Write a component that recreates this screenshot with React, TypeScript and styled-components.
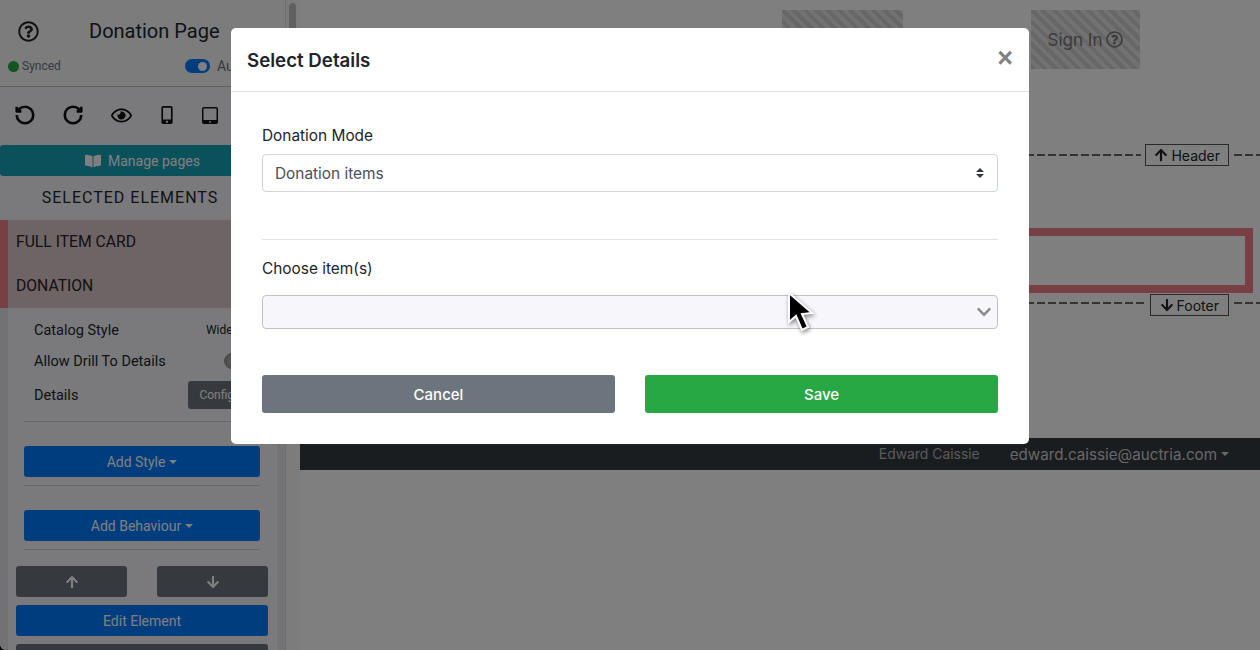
import React from "react";
import styled, { createGlobalStyle } from "styled-components";
import { FaArrowDown, FaArrowUp, FaBookOpen, FaChevronDown, FaMobileAlt, FaRegEye, FaRegQuestionCircle } from "react-icons/fa";
import { RotateCcw, RotateCw } from "lucide-react";

// =============================================================================
// GLOBAL
// =============================================================================
const GlobalStyle = createGlobalStyle`
    html, body {
        margin: 0;
        height: 100%;
        overflow: hidden;
        background: #fff;
    }
    * {
        box-sizing: border-box;
    }
`;

// =============================================================================
// SIDEBAR
// =============================================================================
const Page = styled.div`
    display: flex;
    width: 1260px;
    height: 650px;
    overflow: hidden;
    background: #000;
    font-family: "Inter", sans-serif;
`;

const Sidebar = styled.aside`
    flex: 0 0 285px;
    height: 650px;
    overflow: hidden;
    border-bottom-left-radius: 6px;
    background: #f4f5f9;
    font-family: "Roboto", sans-serif;
    color: #212529;
`;

const ScrollTrack = styled.div`
    flex: 0 0 15px;
    padding: 3px 4px 0 3px;
    background: #f9f9f9;
    border-left: 1px solid #dcdcdc;
`;

const ScrollThumb = styled.div`
    height: 56px;
    border-radius: 4px;
    background: #c1c1c1;
`;

const SideHeader = styled.div`
    height: 87px;
    padding: 20px 8px 0;
    background: #f8f8f8;
    border-bottom: 1px solid #bcbcbc;
`;

const TitleRow = styled.div`
    display: flex;
    align-items: center;
    height: 22px;
    padding-left: 10px;
    font-size: 20px;

    svg {
        font-size: 21px;
        margin-right: 50px;
    }
`;

const StatusRow = styled.div`
    display: flex;
    align-items: center;
    height: 16px;
    margin-top: 16px;
    font-size: 12px;
    color: #6c757d;
`;

const StatusDot = styled.span`
    width: 11px;
    height: 11px;
    margin-right: 3px;
    border-radius: 50%;
    background: #28a745;
`;

const Toggle = styled.span`
    display: flex;
    justify-content: flex-end;
    align-items: center;
    width: 25px;
    height: 14px;
    margin: 0 7px 0 auto;
    padding-right: 3px;
    border-radius: 7px;
    background: #007bff;

    &::after {
        content: "";
        width: 9px;
        height: 9px;
        border-radius: 50%;
        background: #fff;
    }
`;

const AutoLabel = styled.span`
    width: 60px;
    font-size: 14px;
`;

const ToolRow = styled.div`
    display: flex;
    align-items: center;
    height: 58px;
    padding: 0 0 2px 13px;
    color: #111;
`;

const ToolIcon = styled.span<{ $width: number }>`
    display: flex;
    flex: 0 0 ${(p) => p.$width}px;
    justify-content: center;
    font-size: 18px;
`;

const ManageButton = styled.div`
    display: flex;
    justify-content: center;
    align-items: center;
    gap: 7px;
    height: 31px;
    border-radius: 3px;
    background: #17a2b8;
    color: #fff;
    font-size: 14px;

    svg {
        font-size: 16px;
    }
`;

const SectionTitle = styled.div`
    height: 44px;
    padding-right: 25px;
    line-height: 43px;
    text-align: center;
    font-size: 16px;
    letter-spacing: 1px;
`;

const ElementRow = styled.div`
    height: 44px;
    padding-left: 8px;
    border-left: 8px solid #f07f8a;
    background: #dcc6ca;
    line-height: 44px;
    font-size: 15.7px;
`;

const SideBody = styled.div`
    height: 342px;
    border-left: 8px solid #e4e4e6;
    border-right: 8px solid #e8e8ea;
`;

const Props = styled.div`
    padding: 6px 0 0 26px;
`;

const PropRow = styled.div<{ $height: number }>`
    display: flex;
    align-items: center;
    height: ${(p) => p.$height}px;
    font-size: 14.5px;
    white-space: nowrap;
`;

const PropValue = styled.span`
    margin-left: 87px;
    font-size: 12px;
`;

const RadioMark = styled.span`
    width: 16px;
    height: 16px;
    margin-left: 58px;
    border: 3px double #888;
    border-radius: 50%;
    background: #aaa;
`;

const ConfigButton = styled.span`
    display: flex;
    align-items: center;
    width: 60px;
    height: 28px;
    margin-left: 110px;
    padding-left: 11px;
    border-radius: 3px;
    background: #6c757d;
    color: #fff;
    font-size: 12px;
`;

const Rule = styled.hr`
    height: 0;
    margin: 0 17px 0 16px;
    border: 0;
    border-top: 1px solid #ccced2;
`;

const PropsRule = styled(Rule)`
    margin-top: 7px;
`;

const ActionGroup = styled.div`
    display: flex;
    flex-direction: column;
    padding: 0 17px 0 16px;
`;

const WideActions = styled.div`
    display: flex;
    flex-direction: column;
    gap: 8px;
    margin: 16px 9px 0 8px;
`;

const Button = styled.div<{ $bg: string; $fixed?: boolean }>`
    display: flex;
    flex: ${(p) => (p.$fixed ? "0 0 111px" : "none")};
    justify-content: center;
    align-items: center;
    height: 31px;
    border-radius: 3px;
    background: ${(p) => p.$bg};
    color: #fff;
    font-size: 14px;
`;

const StyleButton = styled(Button)`
    margin: 24px 0 8px;
`;

const Caret = styled.span`
    width: 0;
    height: 0;
    margin-left: 4px;
    border-top: 4px solid currentColor;
    border-left: 4px solid transparent;
    border-right: 4px solid transparent;
`;

const ArrowRow = styled.div`
    display: flex;
    justify-content: space-between;
`;

// =============================================================================
// CANVAS
// =============================================================================
const Canvas = styled.main`
    flex: 1;
    display: flex;
    flex-direction: column;
    background: #fff;
    color: #212529;
`;

const TopNav = styled.div`
    display: flex;
    justify-content: flex-end;
    gap: 128px;
    height: 144px;
    padding: 10px 120px 0 0;
`;

const Hatched = styled.div<{ $width: number }>`
    display: flex;
    justify-content: center;
    align-items: center;
    gap: 4px;
    width: ${(p) => p.$width}px;
    height: 59px;
    background: repeating-linear-gradient(45deg, #cfcfcf 0 4px, #e4e4e4 4px 8px);
    color: #777;
    font-size: 17px;
`;

const Boundary = styled.div<{ $top: number }>`
    display: flex;
    align-items: center;
    height: 22px;
    margin-top: ${(p) => p.$top}px;
`;

const DashLine = styled.span<{ $fixed?: boolean; $lift?: boolean }>`
    flex: ${(p) => (p.$fixed ? "0 0 26px" : "1")};
    height: 2px;
    margin-top: ${(p) => (p.$lift ? -4 : 0)}px;
    background: repeating-linear-gradient(90deg, #666 0 8px, transparent 8px 11px);
`;

const BoundaryTag = styled.span<{ $pad: number }>`
    display: flex;
    align-items: center;
    gap: 3px;
    height: 22px;
    margin: 0 5px 0 4px;
    padding: 0 ${(p) => p.$pad}px;
    border: 1px solid #555;
    font-size: 14px;
    color: #212529;
`;

const SelectedBlock = styled.div`
    height: 65px;
    margin: 62px 7px 0 0;
    border: 8px solid #f07f8a;
`;

const FooterBar = styled.div`
    display: flex;
    justify-content: flex-end;
    align-items: center;
    height: 32px;
    margin-top: 122px;
    padding-right: 31px;
    background: #343a40;
    color: #cfcfcf;
    font-size: 14px;
`;

const FooterName = styled.span`
    margin-right: 30px;
    font-size: 13.9px;
    color: #b4b4b4;
`;

const FooterMail = styled.span`
    display: flex;
    align-items: center;
    font-size: 15.2px;
`;

// =============================================================================
// MODAL
// =============================================================================
const Backdrop = styled.div`
    position: fixed;
    inset: 0;
    display: flex;
    justify-content: center;
    align-items: flex-start;
    padding-top: 28px;
    background: rgba(0, 0, 0, 0.5);
    font-family: "Inter", sans-serif;
`;

const Modal = styled.div`
    width: 798px;
    height: 416px;
    border-radius: 5px;
    background: #fff;
    color: #212529;
`;

const ModalHeader = styled.div`
    display: flex;
    justify-content: space-between;
    align-items: center;
    height: 64px;
    padding: 0 16px;
    border-bottom: 1px solid #dee2e6;
`;

const ModalTitle = styled.h5`
    margin: 1px 0 0;
    font-size: 18.7px;
    font-weight: 600;
`;

const CloseMark = styled.span`
    margin-top: -2px;
    font-family: "Liberation Sans", sans-serif;
    font-size: 27px;
    font-weight: 700;
    color: #808080;
`;

const ModalBody = styled.div`
    padding: 32px 31px 0;
`;

const FieldLabel = styled.div`
    height: 24px;
    line-height: 24px;
    font-size: 15.4px;
`;

const ModeSelect = styled.div`
    display: flex;
    justify-content: space-between;
    align-items: center;
    height: 38px;
    margin-top: 6px;
    padding: 0 13px 0 12px;
    border: 1px solid #ced4da;
    border-radius: 4px;
    color: #495057;
    font-size: 15.4px;
`;

const SortArrows = styled.span`
    display: flex;
    flex-direction: column;
    gap: 2px;

    &::before,
    &::after {
        content: "";
        border-left: 4px solid transparent;
        border-right: 4px solid transparent;
    }
    &::before {
        border-bottom: 4px solid #343a40;
    }
    &::after {
        border-top: 4px solid #343a40;
    }
`;

const ModalRule = styled.hr`
    height: 0;
    margin: 47px 0 17px;
    border: 0;
    border-top: 1px solid #e2e3e5;
`;

const ItemsSelect = styled.div`
    display: flex;
    justify-content: flex-end;
    align-items: center;
    height: 34px;
    margin-top: 14px;
    padding-right: 5px;
    border: 1px solid #bfc3c9;
    border-radius: 4px;
    background: #f6f6fb;
    color: #8a8a8a;
    font-size: 16px;
`;

const ModalActions = styled.div`
    display: flex;
    gap: 30px;
    margin-top: 46px;
`;

const ModalButton = styled.div<{ $bg: string }>`
    flex: 1;
    display: flex;
    justify-content: center;
    align-items: center;
    height: 38px;
    border-radius: 3px;
    background: ${(p) => p.$bg};
    color: #fff;
    font-size: 15px;
    font-weight: 500;
`;

const Pointer = styled.svg`
    position: fixed;
    left: 784px;
    top: 288px;
    filter: drop-shadow(1px 2px 2px rgba(0, 0, 0, 0.45));
`;

const TabletGlyph = (): JSX.Element => (
    <svg width="16" height="17" viewBox="0 0 16 17">
        <rect x="0" y="0" width="16" height="17" rx="2" fill="#111" />
        <rect x="1.5" y="1.5" width="13" height="11.5" fill="#f4f5f9" />
        <circle cx="8" cy="15" r="1" fill="#ddd" />
    </svg>
);

// =============================================================================
// APP
// =============================================================================
export default function App(): JSX.Element {
    return (
        <>
            <GlobalStyle />
            <Page>
                <Sidebar>
                    <SideHeader>
                        <TitleRow>
                            <FaRegQuestionCircle />
                            Donation Page
                        </TitleRow>
                        <StatusRow>
                            <StatusDot />
                            Synced
                            <Toggle />
                            <AutoLabel>Auto</AutoLabel>
                        </StatusRow>
                    </SideHeader>
                    <ToolRow>
                        <ToolIcon $width={24}>
                            <RotateCcw size={22} strokeWidth={2.9} strokeLinecap="butt" />
                        </ToolIcon>
                        <ToolIcon $width={72}>
                            <RotateCw size={22} strokeWidth={2.9} strokeLinecap="butt" />
                        </ToolIcon>
                        <ToolIcon $width={24}>
                            <FaRegEye size={21} />
                        </ToolIcon>
                        <ToolIcon $width={68}>
                            <FaMobileAlt />
                        </ToolIcon>
                        <ToolIcon $width={18}>
                            <TabletGlyph />
                        </ToolIcon>
                    </ToolRow>
                    <ManageButton>
                        <FaBookOpen />
                        Manage pages
                    </ManageButton>
                    <SectionTitle>SELECTED ELEMENTS</SectionTitle>
                    <ElementRow>FULL ITEM CARD</ElementRow>
                    <ElementRow>DONATION</ElementRow>
                    <SideBody>
                        <Props>
                            <PropRow $height={32}>
                                Catalog Style
                                <PropValue>Wide</PropValue>
                            </PropRow>
                            <PropRow $height={30}>
                                Allow Drill To Details
                                <RadioMark />
                            </PropRow>
                            <PropRow $height={38}>
                                Details
                                <ConfigButton>Config</ConfigButton>
                            </PropRow>
                        </Props>
                        <PropsRule />
                        <ActionGroup>
                            <StyleButton $bg="#007bff">
                                Add Style
                                <Caret />
                            </StyleButton>
                        </ActionGroup>
                        <Rule />
                        <ActionGroup>
                            <StyleButton $bg="#007bff">
                                Add Behaviour
                                <Caret />
                            </StyleButton>
                        </ActionGroup>
                        <Rule />
                        <WideActions>
                            <ArrowRow>
                                <Button $bg="#6c757d" $fixed>
                                    <FaArrowUp />
                                </Button>
                                <Button $bg="#6c757d" $fixed>
                                    <FaArrowDown />
                                </Button>
                            </ArrowRow>
                            <Button $bg="#007bff">Edit Element</Button>
                            <Button $bg="#6c757d" />
                        </WideActions>
                    </SideBody>
                </Sidebar>
                <ScrollTrack>
                    <ScrollThumb />
                </ScrollTrack>
                <Canvas>
                    <TopNav>
                        <Hatched $width={121} />
                        <Hatched $width={109}>
                            Sign In <FaRegQuestionCircle />
                        </Hatched>
                    </TopNav>
                    <Boundary $top={0}>
                        <DashLine />
                        <BoundaryTag $pad={8}>
                            <FaArrowUp />
                            Header
                        </BoundaryTag>
                        <DashLine $fixed />
                    </Boundary>
                    <SelectedBlock />
                    <Boundary $top={1}>
                        <DashLine $lift />
                        <BoundaryTag $pad={9}>
                            <FaArrowDown />
                            Footer
                        </BoundaryTag>
                        <DashLine $fixed $lift />
                    </Boundary>
                    <FooterBar>
                        <FooterName>Edward Caissie</FooterName>
                        <FooterMail>
                            edward.caissie@auctria.com
                            <Caret />
                        </FooterMail>
                    </FooterBar>
                </Canvas>
            </Page>
            <Backdrop>
                <Modal>
                    <ModalHeader>
                        <ModalTitle>Select Details</ModalTitle>
                        <CloseMark>×</CloseMark>
                    </ModalHeader>
                    <ModalBody>
                        <FieldLabel>Donation Mode</FieldLabel>
                        <ModeSelect>
                            Donation items
                            <SortArrows />
                        </ModeSelect>
                        <ModalRule />
                        <FieldLabel>Choose item(s)</FieldLabel>
                        <ItemsSelect>
                            <FaChevronDown />
                        </ItemsSelect>
                        <ModalActions>
                            <ModalButton $bg="#6c757d">Cancel</ModalButton>
                            <ModalButton $bg="#28a745">Save</ModalButton>
                        </ModalActions>
                    </ModalBody>
                </Modal>
            </Backdrop>
            <Pointer width="34" height="54" viewBox="0 0 34 54">
                <path
                    d="M5 5 L5 34 L12 28 L18 42 L24 39 L18 26 L28 25 Z"
                    fill="#000"
                    stroke="#fff"
                    strokeWidth="2"
                />
            </Pointer>
        </>
    );
}
